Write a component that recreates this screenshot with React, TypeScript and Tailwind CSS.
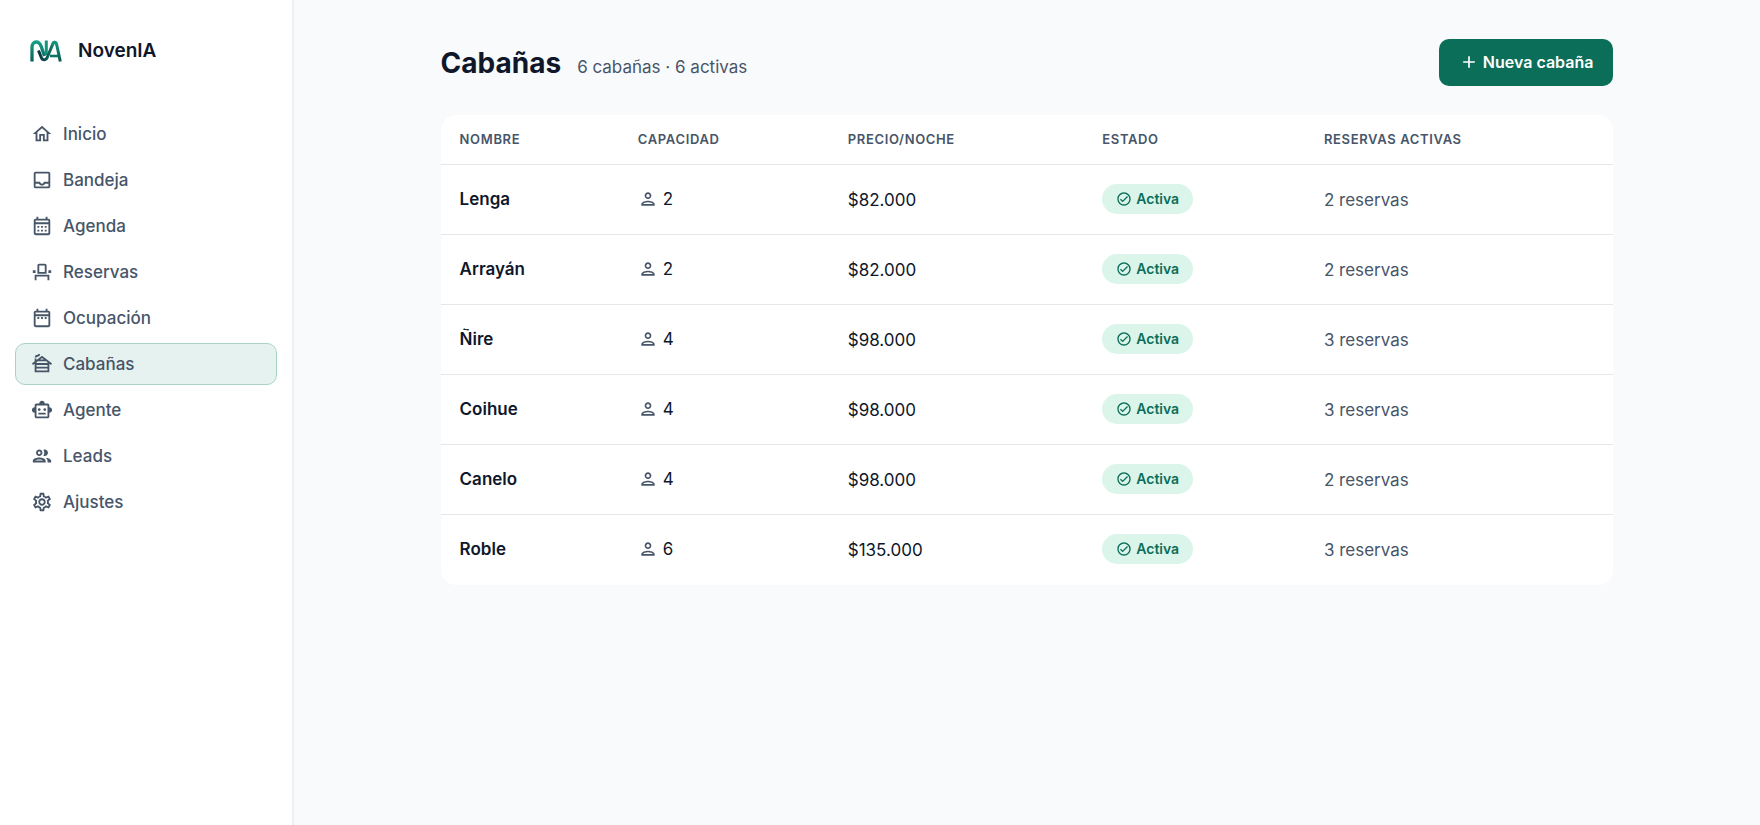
import React from "react";
import type { IconType } from "react-icons";
import {
  MdOutlineHome,
  MdOutlineInbox,
  MdOutlineCalendarMonth,
  MdOutlineEventSeat,
  MdOutlineDateRange,
  MdOutlineCabin,
  MdOutlineSmartToy,
  MdOutlineGroup,
  MdOutlineSettings,
  MdOutlinePerson,
  MdOutlineCheckCircle,
  MdAdd,
} from "react-icons/md";

const navItems: { label: string; icon: IconType; active?: boolean }[] = [
  { label: "Inicio", icon: MdOutlineHome },
  { label: "Bandeja", icon: MdOutlineInbox },
  { label: "Agenda", icon: MdOutlineCalendarMonth },
  { label: "Reservas", icon: MdOutlineEventSeat },
  { label: "Ocupación", icon: MdOutlineDateRange },
  { label: "Cabañas", icon: MdOutlineCabin, active: true },
  { label: "Agente", icon: MdOutlineSmartToy },
  { label: "Leads", icon: MdOutlineGroup },
  { label: "Ajustes", icon: MdOutlineSettings },
];

const cabins = [
  { name: "Lenga", capacity: 2, price: "$82.000", bookings: 2 },
  { name: "Arrayán", capacity: 2, price: "$82.000", bookings: 2 },
  { name: "Ñire", capacity: 4, price: "$98.000", bookings: 3 },
  { name: "Coihue", capacity: 4, price: "$98.000", bookings: 3 },
  { name: "Canelo", capacity: 4, price: "$98.000", bookings: 2 },
  { name: "Roble", capacity: 6, price: "$135.000", bookings: 3 },
];

const columns = [
  { label: "Nombre", width: "w-[15.2%]" },
  { label: "Capacidad", width: "w-[17.9%]" },
  { label: "Precio/noche", width: "w-[21.7%]" },
  { label: "Estado", width: "w-[18.9%]" },
  { label: "Reservas activas", width: "w-[26.3%]" },
];

function Logo() {
  return (
    <svg viewBox="0 0 32 22" className="h-[22px] w-8" fill="none" aria-hidden="true">
      <defs>
        <linearGradient id="logoArch" x1="0" y1="0" x2="0" y2="1">
          <stop offset="0" stopColor="#12a083" />
          <stop offset="1" stopColor="#0b5f55" />
        </linearGradient>
        <linearGradient id="logoHook" x1="0" y1="0" x2="1" y2="0">
          <stop offset="0" stopColor="#0b3440" />
          <stop offset="0.5" stopColor="#0c5a55" />
          <stop offset="1" stopColor="#0e8a70" />
        </linearGradient>
        <linearGradient id="logoA" x1="0" y1="0" x2="0" y2="1">
          <stop offset="0" stopColor="#11967b" />
          <stop offset="1" stopColor="#0a5a50" />
        </linearGradient>
      </defs>
      <path d="M2 21.500V7.500C2 4 3.600 2 6.200 2c2.600 0 3.900 1.400 5 4.500L14.500 16" stroke="url(#logoArch)" strokeWidth="3.300" />
      <path d="M16.300 .5V15" stroke="#12957b" strokeWidth="3" />
      <path d="M8.500 10.500l2.800 7c1.200 3 4.600 3 5.900 0L22.800 4c.8-2.200 2.800-2.200 3.600 0" stroke="url(#logoHook)" strokeWidth="3" />
      <path d="M22.200 5.500c1.200-4.200 3.600-4.200 4.700 0L30.300 21.500" stroke="url(#logoA)" strokeWidth="3" />
      <path d="M20 16h8" stroke="#0c7563" strokeWidth="2.600" />
    </svg>
  );
}

function Sidebar() {
  return (
    <aside className="flex w-[294px] shrink-0 flex-col border-r-2 border-[#eceff3] bg-white px-[15px] pt-[37px]">
      <a href="#inicio" className="flex items-center gap-4 px-[15px] text-[19px] leading-7 font-semibold text-[#0f172a]">
        <Logo />
        NovenIA
      </a>
      <nav aria-label="Principal" className="mt-12 flex flex-col gap-1">
        {navItems.map(({ label, icon: Icon, active }) => (
          <a
            key={label}
            href={"#" + label.toLowerCase()}
            aria-current={active ? "page" : undefined}
            className={
              "flex h-[42px] items-center gap-2.5 rounded-[10px] border px-[15px] text-[17px] leading-6 font-medium text-[#475569] " +
              (active ? "border-[#a9d3c6] bg-[#e6f2ef]" : "border-transparent")
            }
          >
            <Icon size={22} />
            {label}
          </a>
        ))}
      </nav>
    </aside>
  );
}

export default function App() {
  return (
    <div className="flex min-h-screen bg-[#f9fafc] font-['Inter',sans-serif] text-[#0f172a]">
      <Sidebar />
      <main className="min-w-0 flex-1 pt-[39px]">
        <div className="mx-auto w-4/5">
          <header className="flex items-center justify-between">
            <div className="flex items-baseline gap-4">
              <h1 className="text-[28px] leading-10 font-bold">Cabañas</h1>
              <p className="text-[17px] leading-6 text-[#475569]">6 cabañas · 6 activas</p>
            </div>
            <button
              type="button"
              className="flex h-[47px] items-center gap-1 rounded-[10px] bg-[#0b6e58] px-5 pb-0.5 text-[16px] leading-6 font-semibold text-white"
            >
              <MdAdd size={20} />
              Nueva cabaña
            </button>
          </header>

          <div className="mt-[29px] overflow-hidden rounded-[15px] bg-white pb-px">
            <table className="w-full table-fixed border-collapse text-left">
              <thead>
                <tr className="h-[49px] border-b border-[#e5e7eb]">
                  {columns.map((c) => (
                    <th
                      key={c.label}
                      scope="col"
                      className={"px-[19px] text-[13px] leading-5 font-semibold tracking-wider text-[#475569] uppercase " + c.width}
                    >
                      {c.label}
                    </th>
                  ))}
                </tr>
              </thead>
              <tbody>
                {cabins.map((c) => (
                  <tr key={c.name} className="h-[70px] border-b border-[#e5e7eb] text-[17px] leading-6 last:border-b-0">
                    <td className="px-[19px] font-semibold">{c.name}</td>
                    <td className="px-[19px]">
                      <span className="flex items-center gap-[5px]">
                        <MdOutlinePerson size={20} className="text-[#475569]" />
                        {c.capacity}
                      </span>
                    </td>
                    <td className="px-[19px] pt-0.5">{c.price}</td>
                    <td className="px-[19px]">
                      <span className="inline-flex h-[30px] items-center gap-1 rounded-full bg-[#dbf5eb] px-3.5 align-middle text-[14px] leading-5 font-semibold text-[#0b6e58]">
                        <MdOutlineCheckCircle size={16} />
                        Activa
                      </span>
                    </td>
                    <td className="px-[19px] pt-0.5 text-[#475569]">{c.bookings} reservas</td>
                  </tr>
                ))}
              </tbody>
            </table>
          </div>
        </div>
      </main>
    </div>
  );
}
